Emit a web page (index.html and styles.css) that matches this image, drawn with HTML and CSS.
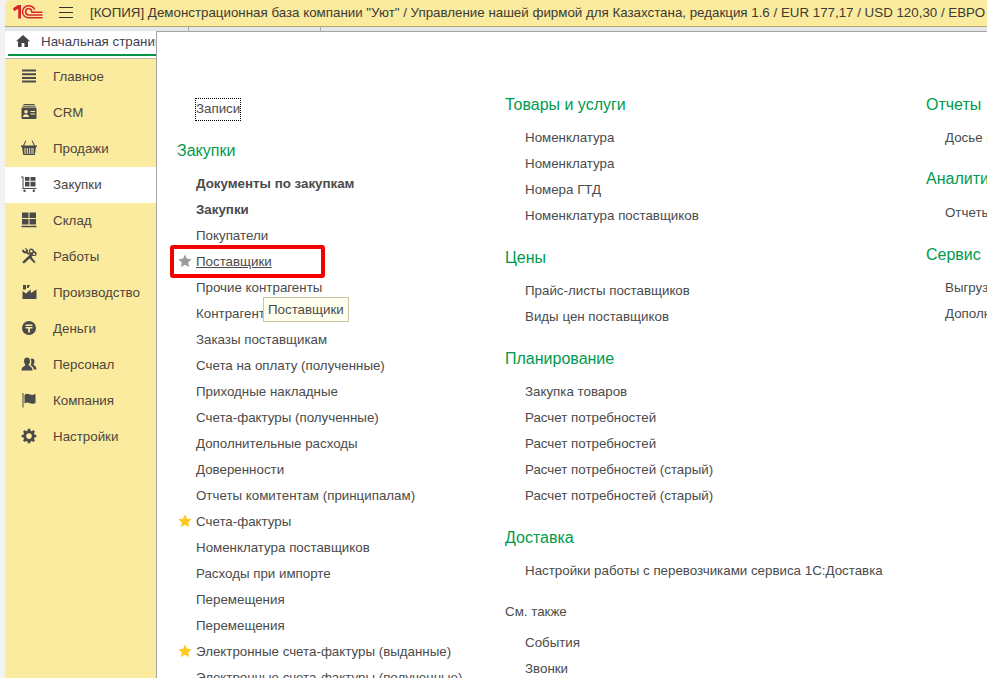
FILE: index.html
```html
<!DOCTYPE html>
<html lang="ru">
<head>
<meta charset="utf-8">
<title>1С</title>
<link rel="stylesheet" href="styles.css">
</head>
<body>
<div class="app">
  <header class="titlebar">
    <svg class="logo" viewBox="0 0 30 14" width="30" height="14"><path fill="#d9262c" d="M0 3.200 5 0H8V13.500H5.200V3.800L1.200 6.200Z"/><g fill="none" stroke="#d9262c" stroke-width="1.500"><path d="M29.500 12.800H15.500A6 6 0 0 1 15.500 .8C18.500 .8 20.500 2 21.800 4.800"/><path d="M29.500 10H15.800A3.200 3.200 0 0 1 15.800 3.600C17.300 3.600 18.300 4.500 18.900 7.200H29.500"/></g></svg>
    <span class="burger"><i></i><i></i><i></i></span>
    <span class="title">[КОПИЯ] Демонстрационная база компании "Уют" / Управление нашей фирмой для Казахстана, редакция 1.6 / EUR 177,17 / USD 120,30 / ЕВРО / Администратор</span>
  </header>
  <div class="tabstrip"><span class="sep-a"></span><span class="sep-b"></span></div>
  <div class="tabs">
    <div class="tab">
      <svg class="home" viewBox="0 0 14 12" width="14" height="12"><path fill="#444" d="M7 0 14 6.200H12V12H8.400V8H5.600V12H2V6.200H0Z"/></svg>
      <span>Начальная страница</span>
    </div>
  </div>
  <nav class="sidebar">
    <a class="nav"><svg class="ico" viewBox="0 0 16 16"><path d="M1 1.500H15V3.500H1ZM1 5.200H15V7.200H1ZM1 8.900H15V10.900H1ZM1 12.600H15V14.600H1Z"/></svg><span>Главное</span></a>
    <a class="nav"><svg class="ico" viewBox="0 0 16 16"><path d="M2.500 0H13.500V1H2.500ZM1.500 1.800H14.500V2.800H1.500ZM1.500 3.600H14.500A1 1 0 0 1 15.500 4.600V14A1 1 0 0 1 14.500 15H1.500A1 1 0 0 1 .5 14V4.600A1 1 0 0 1 1.500 3.600ZM5 6A1.800 1.800 0 1 0 5 9.600 1.800 1.800 0 0 0 5 6ZM2 13H8C8 11 6.500 10.200 5 10.200S2 11 2 13ZM9.500 7V8H14V7ZM9.500 9.500V10.500H14V9.500Z" fill-rule="evenodd"/></svg><span>CRM</span></a>
    <a class="nav"><svg class="ico" viewBox="0 0 16 16"><path d="M4.500 .5 5.300 1 3.200 5.500H12.800L10.700 1 11.500.5 14 5.500H16V7H15L13.800 15H2.200L1 7H0V5.500H2ZM3.500 8V14H4.500V8ZM5.800 8V14H6.800V8ZM8.200 8V14H9.200V8ZM10.500 8V14H11.500V8ZM12.200 8V14H12.700V8Z" fill-rule="evenodd"/></svg><span>Продажи</span></a>
    <a class="nav active"><svg class="ico" viewBox="0 0 16 16"><path d="M0 .5H2.500V12H15.500V13H1.500V1.500H0ZM4 1H8.500V4.800H4ZM9.500 1H14.500V4.800H9.500ZM4 5.800H8.500V10.500H4ZM9.500 5.800H14.500V10.500H9.500ZM3.500 13.500A1.200 1.200 0 1 1 3.500 15.900 1.200 1.200 0 0 1 3.500 13.500ZM12.800 13.500A1.200 1.200 0 1 1 12.800 15.900 1.200 1.200 0 0 1 12.800 13.500Z"/></svg><span>Закупки</span></a>
    <a class="nav"><svg class="ico" viewBox="0 0 16 16"><path d="M1 .5H7.500V6H1ZM8.500.5H15V6H8.500ZM1 7H7.500V12.500H1ZM8.500 7H15V12.500H8.500ZM.5 13.800H15.500V15.200H.5Z"/></svg><span>Склад</span></a>
    <a class="nav"><svg class="ico" viewBox="0 0 16 16"><path d="M2 1.500 4 3.500 5.500 2 3.500 .5C5 0 7 1 7 3L6.800 4 8.500 5.800 7.300 7 5.500 5.300C3 6 .8 4 1 2ZM10 .5A3 3 0 0 1 13 3.200 2.500 2.500 0 0 1 15.500 6.500C15 8 13 8.500 11.800 7.700L10.500 9 14.500 14 13.300 15.200 8.700 10.500 3 15.500 1.200 14 6.700 8.800 8.700 6.800 8 4C7.500 2 8.500.5 10 .5ZM10.300 2A1.300 1.300 0 1 0 10.300 4.600 1.300 1.300 0 0 0 10.300 2ZM13 5A1.100 1.100 0 1 0 13 7.200 1.100 1.100 0 0 0 13 5Z" fill-rule="evenodd"/></svg><span>Работы</span></a>
    <a class="nav"><svg class="ico" viewBox="0 0 16 16"><path d="M2 1H5V5.500H2ZM6 1H9L7.500 4H6ZM1.500 7 5 9.500 9.500 5.500 10 9 15.500 5.500V15H1.500Z"/></svg><span>Производство</span></a>
    <a class="nav"><svg class="ico" viewBox="0 0 16 16"><path d="M8 1A7 7 0 1 0 8 15 7 7 0 0 0 8 1ZM4.500 4.500H11.500V6H4.500ZM4.500 7H11.500V8.500H8.900V12.500H7.100V8.500H4.500Z" fill-rule="evenodd"/></svg><span>Деньги</span></a>
    <a class="nav"><svg class="ico" viewBox="0 0 16 16"><path d="M6 1.500C8 1.500 9 3 9 5S8 8.500 7.500 9C8 10 11.500 10.500 11.500 14.500H.5C.5 10.500 4 10 4.500 9 4 8.500 3 7 3 5S4 1.500 6 1.500ZM11 2.500C12.500 2.500 13.500 3.800 13.500 5.500S12.800 8 12.300 8.500C12.800 9.300 15.500 10 15.500 13.500H12.800C12.500 11 10.500 9.800 9.500 9.300 10.300 8 10.500 6.500 10.200 4.500 10 3.800 10 3.200 9.700 2.800 10 2.600 10.500 2.500 11 2.500Z"/></svg><span>Персонал</span></a>
    <a class="nav"><svg class="ico" viewBox="0 0 16 16"><path d="M1.500 1H2.500V15.500H1.500ZM3.500 3C5.500 1 7 1.800 9 2.500 11 3.200 13 3 14.500 1.800V11C13 12 11 12 9 11.300 7 10.600 5.500 10 3.500 11.500Z"/></svg><span>Компания</span></a>
    <a class="nav"><svg class="ico" viewBox="0 0 16 16"><path d="M6.800.8H9.200L9.600 2.700 10.800 3.200 12.400 2.100 14 3.700 12.900 5.300 13.400 6.500 15.300 6.900V9.200L13.400 9.600 12.900 10.800 14 12.400 12.400 14 10.800 12.900 9.600 13.400 9.200 15.300H6.800L6.400 13.400 5.200 12.900 3.600 14 2 12.400 3.100 10.800 2.600 9.600.7 9.200V6.900L2.600 6.500 3.100 5.300 2 3.700 3.600 2.100 5.200 3.200 6.400 2.700ZM8 5.300A2.800 2.800 0 1 0 8 10.900 2.800 2.800 0 0 0 8 5.300Z" fill-rule="evenodd"/></svg><span>Настройки</span></a>
  </nav>
  <main class="panel">
    <section class="col col-one">
      <a class="item record"><span class="focus">Записи</span></a>
      <h2>Закупки</h2>
      <a class="item bold">Документы по закупкам</a>
      <a class="item bold">Закупки</a>
      <a class="item">Покупатели</a>
      <a class="item"><svg class="star" viewBox="0 0 14 14"><path class="grey" d="M7 .6 9 4.800 13.600 5.300 10.200 8.400 11.100 13 7 10.700 2.900 13 3.800 8.400.4 5.300 5 4.800Z"/></svg><span class="under">Поставщики</span></a>
      <a class="item">Прочие контрагенты</a>
      <a class="item">Контрагенты</a>
      <a class="item">Заказы поставщикам</a>
      <a class="item">Счета на оплату (полученные)</a>
      <a class="item">Приходные накладные</a>
      <a class="item">Счета-фактуры (полученные)</a>
      <a class="item">Дополнительные расходы</a>
      <a class="item">Доверенности</a>
      <a class="item">Отчеты комитентам (принципалам)</a>
      <a class="item"><svg class="star" viewBox="0 0 14 14"><path class="gold" d="M7 .6 9 4.800 13.600 5.300 10.200 8.400 11.100 13 7 10.700 2.900 13 3.800 8.400.4 5.300 5 4.800Z"/></svg>Счета-фактуры</a>
      <a class="item">Номенклатура поставщиков</a>
      <a class="item">Расходы при импорте</a>
      <a class="item">Перемещения</a>
      <a class="item">Перемещения</a>
      <a class="item"><svg class="star" viewBox="0 0 14 14"><path class="gold" d="M7 .6 9 4.800 13.600 5.300 10.200 8.400 11.100 13 7 10.700 2.900 13 3.800 8.400.4 5.300 5 4.800Z"/></svg>Электронные счета-фактуры (выданные)</a>
      <a class="item">Электронные счета-фактуры (полученные)</a>
    </section>
    <section class="col col-two">
      <h2>Товары и услуги</h2>
      <a class="item">Номенклатура</a>
      <a class="item">Номенклатура</a>
      <a class="item">Номера ГТД</a>
      <a class="item">Номенклатура поставщиков</a>
      <h2>Цены</h2>
      <a class="item">Прайс-листы поставщиков</a>
      <a class="item">Виды цен поставщиков</a>
      <h2>Планирование</h2>
      <a class="item">Закупка товаров</a>
      <a class="item">Расчет потребностей</a>
      <a class="item">Расчет потребностей</a>
      <a class="item">Расчет потребностей (старый)</a>
      <a class="item">Расчет потребностей (старый)</a>
      <h2>Доставка</h2>
      <a class="item">Настройки работы с перевозчиками сервиса 1С:Доставка</a>
      <h3>См. также</h3>
      <a class="item">События</a>
      <a class="item">Звонки</a>
    </section>
    <section class="col col-three">
      <h2>Отчеты</h2>
      <a class="item">Досье контрагента</a>
      <h2 class="analytics">Аналитика</h2>
      <a class="item">Отчеты по закупкам</a>
      <h2>Сервис</h2>
      <a class="item">Выгрузка</a>
      <a class="item">Дополнительные</a>
    </section>
    <div class="redbox"></div>
    <div class="tooltip">Поставщики</div>
  </main>
</div>
</body>
</html>
```
FILE: styles.css
```css
* { box-sizing: border-box; }
html, body { margin: 0; padding: 0; }
body {
  width: 987px;
  height: 678px;
  overflow: hidden;
  background: #f2f2f2;
  font-family: "Liberation Sans", Arial, sans-serif;
  font-size: 13.33px;
  color: #4b4b4b;
}
.app {
  position: relative;
  width: 987px;
  height: 678px;
  padding-left: 5px;
  display: flex;
  flex-direction: column;
  overflow: hidden;
}
.titlebar {
  flex: none;
  height: 27px;
  display: flex;
  align-items: center;
  background: #fbeb9e;
  border-bottom: 1px solid #b5aa73;
  border-top-left-radius: 6px;
  white-space: nowrap;
  overflow: hidden;
}
.logo { flex: none; margin-left: 8px; margin-top: -2px; }
.burger {
  flex: none;
  width: 14px;
  height: 11px;
  margin-left: 16px;
  margin-top: -1px;
  display: flex;
  flex-direction: column;
  justify-content: space-between;
}
.burger i { display: block; height: 1px; background: #333; }
.title { margin-left: 17px; font-size: 13.33px; color: #3d3a34; margin-top: -1px; }
.tabstrip {
  flex: none;
  height: 4px;
  display: flex;
  background: #e6e6e6;
}
.sep-a, .sep-b { width: 1px; background: #aaa; }
.sep-a { margin-left: 183px; }
.sep-b { margin-left: 131px; }
.tabs {
  flex: none;
  height: 28px;
  background: #fff;
  border-bottom: 1px solid #b8b8b8;
  padding: 0 0 2px 3px;
}
.tab {
  width: 148px;
  height: 25px;
  display: flex;
  align-items: center;
  padding: 0 0 3px 8px;
  border-bottom: 2px solid #009646;
  color: #3f3f55;
  white-space: nowrap;
  overflow: hidden;
}
.home { flex: none; margin-right: 11px; }
.sidebar {
  flex: 1;
  width: 152px;
  background: #fbeb9e;
  border-right: 1px solid #a39c63;
}
.nav {
  height: 36px;
  display: flex;
  align-items: center;
  padding: 0 0 2px 16px;
  color: #4d4540;
}
.nav.active { background: #fff; }
.ico { flex: none; width: 16px; height: 16px; margin-right: 16px; fill: #4a4a4a; }
.panel {
  position: absolute;
  left: 156px;
  top: 31px;
  width: 831px;
  height: 647px;
  background: #fff;
  border-top: 1px solid #a6a6a6;
  border-left: 1px solid #a6a6a6;
  padding-left: 20px;
  display: flex;
  overflow: hidden;
}
.col { flex: none; }
.col-one { width: 328px; padding-top: 65px; }
.col-two { width: 421px; padding-top: 60px; }
.col-three { width: 200px; padding-top: 60px; }
h2 {
  margin: 16px 0 7px;
  font-size: 16px;
  font-weight: 400;
  line-height: 26px;
  color: #009a4e;
  white-space: nowrap;
}
.col > h2:first-child { margin-top: 0; }
.col-one h2 { margin-top: 15px; }
.col-three h2.analytics { margin: 15px 0 8px; }
h3 {
  margin: 18px 0 8px;
  font-size: 13.33px;
  font-weight: 400;
  line-height: 20px;
}
.item {
  display: block;
  position: relative;
  height: 26px;
  line-height: 26px;
  padding-left: 19px;
  white-space: nowrap;
}
.col-two .item { padding-left: 20px; }
.bold { font-weight: 700; }
.under { text-decoration: underline; }
.focus { display: inline-block; height: 21px; line-height: 20px; outline: 1px dotted #000; outline-offset: 0; }
.record { padding-top: 1px; line-height: 21px; }
.star { position: absolute; left: 1px; top: 5px; width: 14px; height: 14px; }
.grey { fill: #9b9b9b; }
.gold { fill: #ffc91f; }
.redbox {
  position: absolute;
  left: 13px;
  top: 213px;
  width: 155px;
  height: 33px;
  border: 4px solid #f50000;
  border-radius: 3px;
}
.tooltip {
  position: absolute;
  left: 106px;
  top: 265px;
  width: 86px;
  height: 25px;
  padding-left: 4px;
  line-height: 23px;
  background: #ffffee;
  border: 1px solid #cbc5a5;
  color: #4b4b4b;
  white-space: nowrap;
}
```
